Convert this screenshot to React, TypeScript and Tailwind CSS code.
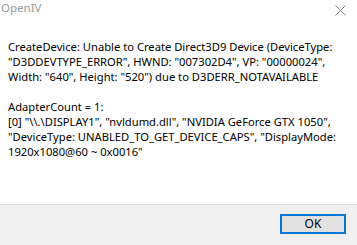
export default function App() {
  const font = { fontFamily: '"Noto Sans", sans-serif' };
  return (
    <div className="w-[357px] h-[245px] bg-white flex flex-col overflow-hidden text-black" style={font}>
      <div className="h-[30px] flex items-start justify-between">
        <span className="pl-[1px] pt-[0px] text-[11.5px] leading-[16px] text-[#999999]">OpenIV</span>
        <svg width="11" height="11" viewBox="0 0 11 11" className="mt-[5px] mr-[11px]">
          <path d="M0.5 0.5 L10.5 10.5 M10.5 0.5 L0.5 10.5" stroke="#8a8a8a" strokeWidth="1" />
        </svg>
      </div>
      <div className="flex-1 pl-[8px] pt-[9px] text-[11.2px] leading-[15px] whitespace-nowrap">
        <div>CreateDevice: Unable to Create Direct3D9 Device (DeviceType:</div>
        <div>"D3DDEVTYPE_ERROR", HWND: "007302D4", VP: "00000024",</div>
        <div>Width: "640", Height: "520") due to D3DERR_NOTAVAILABLE</div>
        <div className="h-[15px]" />
        <div>AdapterCount = 1:</div>
        <div>[0] "\\.\DISPLAY1", "nvldumd.dll", "NVIDIA GeForce GTX 1050",</div>
        <div>"DeviceType: UNABLED_TO_GET_DEVICE_CAPS", "DisplayMode:</div>
        <div>1920x1080@60 ~ 0x0016"</div>
      </div>
      <div className="h-[41px] bg-[#f0f0f0] border-t border-[#dfdfdf] flex justify-end items-start pt-[9px] pr-[11px]">
        <button className="w-[66px] h-[20px] bg-[#e1e1e1] border-2 border-[#0078d7] text-[12px] leading-[14px] flex items-center justify-center">
          OK
        </button>
      </div>
    </div>
  );
}
